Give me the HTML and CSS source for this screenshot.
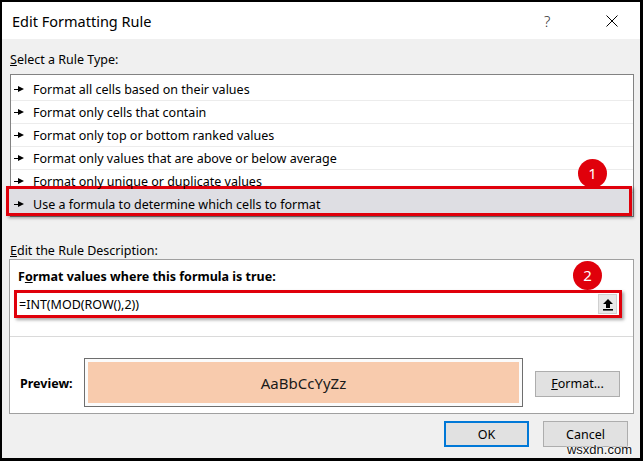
FILE: index.html
```html
<!DOCTYPE html>
<html>
<head>
<meta charset="utf-8">
<link rel="stylesheet" href="styles.css">
</head>
<body>
<div class="window">
  <div class="titlebar">
    <span class="title">Edit Formatting Rule</span>
    <span class="help">?</span>
    <span class="close">
      <svg width="12" height="12" viewBox="0 0 12 12"><path d="M0.5 0.5 L11.5 11.5 M11.5 0.5 L0.5 11.5" stroke="#000" stroke-width="1" fill="none"/></svg>
    </span>
  </div>
  <div class="content">
    <div class="label first"><u>S</u>elect a Rule Type:</div>
    <div class="listbox">
      <div class="item"><span class="arrow"></span><span class="txt">Format all cells based on their values</span></div>
      <div class="item"><span class="arrow"></span><span class="txt">Format only cells that contain</span></div>
      <div class="item"><span class="arrow"></span><span class="txt">Format only top or bottom ranked values</span></div>
      <div class="item"><span class="arrow"></span><span class="txt">Format only values that are above or below average</span></div>
      <div class="item"><span class="arrow"></span><span class="txt">Format only unique or duplicate values</span></div>
      <div class="item selected"><span class="arrow"></span><span class="txt">Use a formula to determine which cells to format</span></div>
    </div>
    <div class="label second"><u>E</u>dit the Rule Description:</div>
    <div class="descbox">
      <div class="heading">F<u>o</u>rmat values where this formula is true:</div>
      <div class="formula">
        <span class="ftext">=INT(MOD(ROW(),2))</span>
        <span class="refbtn">
          <svg width="12" height="13" viewBox="0 0 12 13"><path d="M6 1 L11 6 L8 6 L8 10 L4 10 L4 6 L1 6 Z" fill="#000"/><rect x="1" y="11" width="10" height="1.6" fill="#000"/></svg>
        </span>
      </div>
      <div class="sep"></div>
      <div class="preview-row">
        <span class="plabel">Preview:</span>
        <div class="pbox"><div class="pfill">AaBbCcYyZz</div></div>
        <button class="btn fmt"><u>F</u>ormat...</button>
      </div>
    </div>
    <div class="actions">
      <button class="btn ok">OK</button>
      <button class="btn">Cancel</button>
    </div>
  </div>
  <span class="badge b1">1</span>
  <span class="badge b2">2</span>
  <span class="watermark">wsxdn.com</span>
</div>
</body>
</html>
```

FILE: styles.css
```css
html, body {
  margin: 0;
  padding: 0;
  background: #000;
}
.window {
  position: relative;
  width: 643px;
  height: 461px;
  box-sizing: border-box;
  border-style: solid;
  border-color: #000;
  border-width: 2px 3px 3px 2px;
  background: #f0f0f0;
  font-family: "Noto Sans", "Open Sans", sans-serif;
  font-size: 12.5px;
  color: #000;
  overflow: hidden;
}
.titlebar {
  height: 37px;
  background: #fff;
  display: flex;
  align-items: center;
  padding-left: 10px;
}
.title {
  font-size: 14.5px;
  flex: 1;
}
.help {
  font-size: 15px;
  width: 14px;
  color: #333;
  font-weight: 300;
  margin-right: 48px;
}
.close {
  display: flex;
  margin-right: 22px;
}
.content {
  padding: 0 6px 0 7px;
}
.label {
  height: 16px;
  line-height: 16px;
  padding-left: 1px;
}
.label.first {
  margin-top: 13px;
  margin-bottom: 6px;
}
.label.second {
  margin-top: 26px;
}
.listbox {
  margin-left: 1px;
  border: 1px solid #828282;
  background: #fff;
  padding-top: 3px;
  height: 138px;
}
.item {
  height: 22px;
  border-bottom: 1px solid #ececec;
  display: flex;
  align-items: center;
  padding-left: 3px;
}
.arrow {
  display: inline-block;
  width: 0;
  height: 0;
  border-top: 3.5px solid transparent;
  border-bottom: 3.5px solid transparent;
  border-left: 6px solid #000;
  margin-right: 9px;
  position: relative;
  margin-left: 4px;
}
.arrow::before {
  content: "";
  position: absolute;
  left: -10px;
  top: -0.5px;
  width: 5px;
  height: 1px;
  background: #000;
}
.item .txt {
  position: relative;
  z-index: 1;
}
.item .arrow {
  z-index: 1;
}
.item.selected {
  position: relative;
  border-bottom: none;
}
.item.selected::before {
  content: "";
  position: absolute;
  left: -5px;
  right: 1px;
  top: -7px;
  bottom: -1px;
  border: 3px solid #e0000b;
  background: #dedee3;
  box-shadow: 2px 2px 3px rgba(0,0,0,0.35);
  z-index: 0;
}
.descbox {
  background: #fff;
  border: 1px solid #a0a0a0;
  padding: 9px 0 6px 0;
}
.heading {
  font-weight: bold;
  height: 16px;
  line-height: 16px;
  padding-left: 8px;
}
.formula {
  margin: 5px 11px 0 4px;
  height: 22px;
  border: 3px solid #e0000b;
  box-shadow: 2px 2px 3px rgba(0,0,0,0.35);
  display: flex;
  align-items: center;
  background: #fff;
}
.ftext {
  flex: 1;
  padding-left: 2px;
}
.refbtn {
  width: 19px;
  height: 20px;
  margin-right: 2px;
  background: #e8e8e8;
  border: 1px solid #d0d0d0;
  box-sizing: border-box;
  display: flex;
  align-items: center;
  justify-content: center;
}
.sep {
  height: 1px;
  background: #dadada;
  margin-top: 18px;
}
.preview-row {
  display: flex;
  align-items: center;
  padding: 21px 13px 0 10px;
}
.plabel {
  width: 64px;
  font-weight: bold;
  margin-top: 2px;
}
.pbox {
  width: 439px;
  height: 49px;
  box-sizing: border-box;
  border: 1px solid #6e6e6e;
  padding: 3px;
  background: #fbfbfb;
}
.pfill {
  height: 100%;
  background: #f8cbad;
  display: flex;
  align-items: center;
  justify-content: center;
  font-size: 15px;
  color: #1a1a1a;
}
.btn {
  font-family: inherit;
  font-size: 12.5px;
  color: #000;
  width: 85px;
  height: 26px;
  background: #e1e1e1;
  border: 1px solid #adadad;
  padding: 0;
  margin: 0;
}
.btn.fmt {
  margin-left: 12px;
  margin-top: 2px;
}
.actions {
  display: flex;
  justify-content: flex-end;
  gap: 14px;
  margin-top: 7px;
  padding-right: 6px;
}
.btn.ok {
  border: 2px solid #0078d7;
}
.badge {
  position: absolute;
  width: 29px;
  height: 29px;
  border-radius: 50%;
  background: #e0000b;
  color: #fff;
  font-size: 15px;
  line-height: 29px;
  text-align: center;
  z-index: 5;
}
.b1 {
  left: 576px;
  top: 157px;
}
.b2 {
  left: 571px;
  top: 259px;
}
.watermark {
  position: absolute;
  right: 8px;
  bottom: 1px;
  font-family: "Liberation Sans", Arial, sans-serif;
  font-size: 13px;
  color: #111;
  text-shadow: 0 0 2px #fff, 0 0 2px #fff, 0 0 2px #fff;
}
```
